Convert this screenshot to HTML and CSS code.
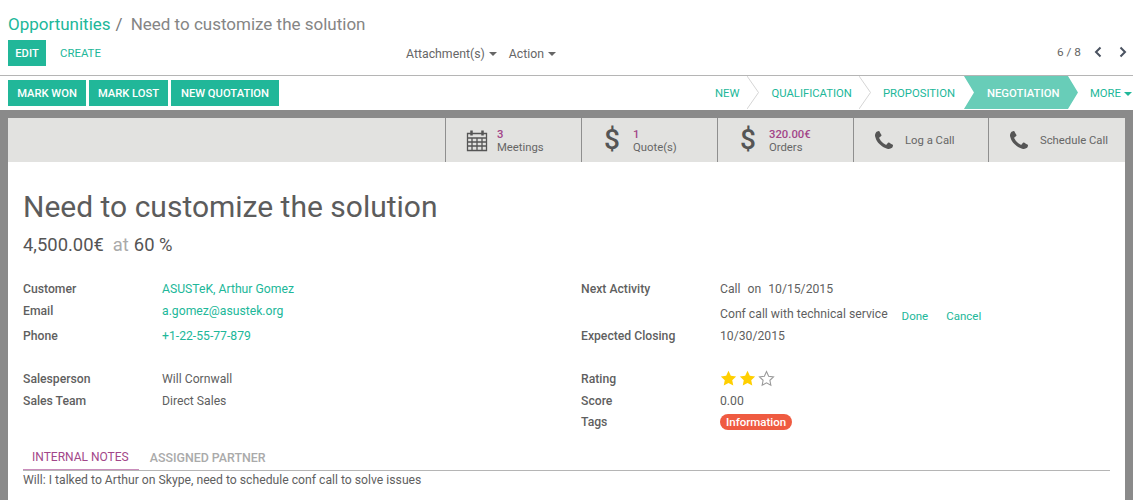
FILE: index.html
```html
<!DOCTYPE html>
<html lang="en">
<head>
<meta charset="utf-8">
<title>Need to customize the solution</title>
<link rel="stylesheet" href="styles.css">
</head>
<body>
<header class="control">
  <div class="crumbs"><a class="crumb-link">Opportunities</a><span class="crumb-sep">/</span><span class="crumb-cur">Need to customize the solution</span></div>
  <div class="actions">
    <div class="actions-left"><button class="btn">EDIT</button><a class="link-btn">CREATE</a></div>
    <div class="actions-mid"><span class="drop">Attachment(s)<i class="caret"></i></span><span class="drop">Action<i class="caret"></i></span></div>
    <div class="pager"><span>6 / 8</span>
      <svg class="chev" viewBox="0 0 10 12"><path d="M7.500 1.500 3 6l4.500 4.500" /></svg>
      <svg class="chev chev-next" viewBox="0 0 10 12"><path d="M2.500 1.500 7 6l-4.500 4.500" /></svg>
    </div>
  </div>
</header>
<div class="statusbar">
  <div class="status-btns"><button class="btn">MARK WON</button><button class="btn">MARK LOST</button><button class="btn">NEW QUOTATION</button></div>
  <div class="stages">
    <span class="stage s-new">NEW<svg class="sep" viewBox="0 0 12 33" preserveAspectRatio="none"><path d="M0 0 11.500 16.500 0 33"/></svg></span>
    <span class="stage s-qual">QUALIFICATION<svg class="sep" viewBox="0 0 12 33" preserveAspectRatio="none"><path d="M0 0 11.500 16.500 0 33"/></svg></span>
    <span class="stage s-prop">PROPOSITION</span>
    <span class="stage s-active">NEGOTIATION</span>
    <span class="stage s-more">MORE<i class="caret caret-teal"></i></span>
  </div>
</div>
<main class="backdrop">
  <div class="sheet">
    <div class="buttonbox">
      <div class="stat"><svg class="ico-cal" viewBox="0 0 22 23"><path class="cal" d="M1.500 4.500h19v17h-19zM1.500 9h19M1.500 13h19M1.500 17h19M6 9v12.500M11 9v12.500M16 9v12.500"/><path class="cal cal-ring" d="M5.500 1.500v5M16.500 1.500v5"/></svg><div class="stat-txt"><b>3</b><span>Meetings</span></div></div>
      <div class="stat"><span class="dollar">$</span><div class="stat-txt"><b>1</b><span>Quote(s)</span></div></div>
      <div class="stat"><span class="dollar">$</span><div class="stat-txt"><b>320.00€</b><span>Orders</span></div></div>
      <div class="stat"><svg class="ico-phone" viewBox="0 0 1408 1408"><path d="M1408 1112q0 27-10 70.500t-21 68.500q-21 50-122 106-94 51-186 51-27 0-53-3.500t-57.500-12.500-47-14.500-55.500-20.500-49-18q-98-35-175-83-127-79-264-216t-216-264q-48-77-83-175-3-9-18-49t-20.500-55.500-14.500-47-12.500-57.500-3.500-53q0-92 51-186 56-101 106-122 25-11 68.500-21t70.500-10q14 0 21 3 18 6 53 76 11 19 30 54t35 63.500 31 53.500q3 4 17.500 25t21.500 35.500 7 28.500q0 20-28.500 50t-62 55-62 53-28.500 46q0 9 5 22.500t8.500 20.500 14 24 11.500 19q76 137 174 235t235 174q2 1 19 11.500t24 14 20.500 8.500 22.500 5q18 0 46-28.500t53-62 55-62 50-28.500q14 0 28.500 7t35.500 21.500 25 17.500q25 15 53.500 31t63.500 35 54 30q70 35 76 53 3 7 3 21z"/></svg><span class="stat-one">Log a Call</span></div>
      <div class="stat"><svg class="ico-phone" viewBox="0 0 1408 1408"><path d="M1408 1112q0 27-10 70.500t-21 68.500q-21 50-122 106-94 51-186 51-27 0-53-3.500t-57.500-12.500-47-14.500-55.500-20.500-49-18q-98-35-175-83-127-79-264-216t-216-264q-48-77-83-175-3-9-18-49t-20.500-55.500-14.500-47-12.500-57.500-3.500-53q0-92 51-186 56-101 106-122 25-11 68.500-21t70.500-10q14 0 21 3 18 6 53 76 11 19 30 54t35 63.500 31 53.500q3 4 17.500 25t21.500 35.500 7 28.500q0 20-28.500 50t-62 55-62 53-28.500 46q0 9 5 22.500t8.500 20.500 14 24 11.500 19q76 137 174 235t235 174q2 1 19 11.500t24 14 20.500 8.500 22.500 5q18 0 46-28.500t53-62 55-62 50-28.500q14 0 28.500 7t35.500 21.500 25 17.500q25 15 53.500 31t63.500 35 54 30q70 35 76 53 3 7 3 21z"/></svg><span class="stat-one">Schedule Call</span></div>
    </div>
    <div class="body">
      <h1 class="title">Need to customize the solution</h1>
      <div class="amount">4,500.00€<span class="at">at</span>60 %</div>
      <div class="cols">
        <div class="col">
          <div class="row r-customer"><label>Customer</label><a>ASUSTeK, Arthur Gomez</a></div>
          <div class="row r-email"><label>Email</label><a>a.gomez@asustek.org</a></div>
          <div class="row r-phone"><label>Phone</label><a>+1-22-55-77-879</a></div>
          <div class="row r-sales"><label>Salesperson</label><span>Will Cornwall</span></div>
          <div class="row r-team"><label>Sales Team</label><span>Direct Sales</span></div>
        </div>
        <div class="col">
          <div class="row r-customer"><label>Next Activity</label><span class="activity"><span>Call</span><span>on</span><span>10/15/2015</span></span></div>
          <div class="row r-conf"><label></label><span>Conf call with technical service</span><a class="act act-done">Done</a><a class="act">Cancel</a></div>
          <div class="row r-close"><label>Expected Closing</label><span>10/30/2015</span></div>
          <div class="row r-rating"><label>Rating</label><span class="stars">
            <svg viewBox="0 0 16 16"><path class="on" d="m8 .8 2.200 4.700 5 .6-3.700 3.500 1 5.100L8 12.200l-4.500 2.500 1-5.100L.8 6.100l5-.6z"/></svg>
            <svg viewBox="0 0 16 16"><path class="on" d="m8 .8 2.200 4.700 5 .6-3.700 3.500 1 5.100L8 12.200l-4.500 2.500 1-5.100L.8 6.100l5-.6z"/></svg>
            <svg viewBox="0 0 16 16"><path class="off" d="m8 1.500 2 4.400 4.600.6-3.400 3.200.9 4.700L8 12.100l-4.100 2.300.9-4.700L1.400 6.500 6 5.900z"/></svg>
          </span></div>
          <div class="row r-score"><label>Score</label><span>0.00</span></div>
          <div class="row r-tags"><label>Tags</label><span class="tag">Information</span></div>
        </div>
      </div>
      <div class="tabs"><span class="tab tab-on">INTERNAL NOTES</span><span class="tab">ASSIGNED PARTNER</span></div>
      <p class="note">Will: I talked to Arthur on Skype, need to schedule conf call to solve issues</p>
    </div>
  </div>
</main>
</body>
</html>
```
FILE: styles.css
```css
html, body { margin: 0; padding: 0; height: 500px; overflow: hidden; }
body { font-family: Roboto, sans-serif; font-size: 12.200px; line-height: 18px; color: #5f5f5f; background: #fff; }
a { color: #21b799; }
button { font-family: inherit; }

.control { box-sizing: border-box; padding: 14px 8px 0; border-bottom: 1px solid #b5b5b5; height: 76px; }
.crumbs { font-size: 17px; line-height: 20px; height: 26px; display: flex; }
.crumb-link { color: #21b799; }
.crumb-sep { color: #777; margin: 0 8px 0 5px; }
.crumb-cur { color: #858585; }
.actions { display: flex; align-items: center; height: 26px; }
.actions-left { display: flex; align-items: center; width: 398px; }
.btn { border: 0; background: #21b799; color: #fff; font-size: 11.200px; font-weight: 500; height: 26px; padding: 0; }
.actions .btn { width: 38px; }
.link-btn { margin-left: 14px; font-size: 11.400px; }
.actions-mid { display: flex; gap: 12px; flex: 1; padding-top: 1px; }
.drop { color: #666; display: inline-flex; align-items: center; font-size: 12.300px; }
.caret { display: inline-block; width: 0; height: 0; border: 4px solid transparent; border-top-color: #666; border-bottom: 0; margin-left: 4px; }
.pager { display: flex; align-items: center; color: #666; margin-right: -3px; font-size: 11.800px; padding-bottom: 3px; }
.chev { width: 10px; height: 12px; margin-left: 12px; }
.chev-next { margin-left: 15px; }
.chev path { fill: none; stroke: #4a5260; stroke-width: 2; }

.statusbar { display: flex; justify-content: space-between; height: 34px; padding-left: 8px; }
.status-btns { display: flex; gap: 3px; padding-top: 4px; }
.status-btns .btn:nth-child(1) { width: 78px; }
.status-btns .btn:nth-child(2) { width: 79px; }
.status-btns .btn:nth-child(3) { width: 108px; }
.stages { display: flex; align-items: center; font-size: 11.300px; color: #21b799; height: 33px; margin-right: 1px; }
.stage { display: flex; align-items: center; height: 33px; position: relative; box-sizing: border-box; padding-top: 3px; }
.sep { position: absolute; top: 0; width: 12px; height: 33px; }
.sep path { fill: none; stroke: #d5d5d5; stroke-width: 1; }
.s-new { padding-right: 32px; }
.s-new .sep { right: 12px; }
.s-qual { padding-right: 31px; }
.s-qual .sep { right: 12px; }
.s-prop { padding-right: 9px; }
.s-active { background: #68cdb8; color: #fff; font-weight: 500; width: 114px; padding-left: 23px; clip-path: polygon(0 0, 104px 0, 114px 50%, 104px 100%, 0 100%, 10px 50%); }
.s-more { padding-left: 12px; }
.caret-teal { border-top-color: #21b799; margin-left: 3px; }

.backdrop { background: #8a8a8a; padding: 8px 8px 0; height: 390px; box-sizing: border-box; }
.sheet { background: #fff; height: 382px; }
.buttonbox { display: flex; justify-content: flex-end; height: 44px; background: #e2e2e0; padding-right: 1px; }
.stat { width: 135px; border-left: 1px solid #8f8f8f; display: flex; align-items: center; }
.stat:nth-child(4) { width: 134px; }
.stat-txt { display: flex; flex-direction: column; font-size: 11.300px; line-height: 13px; color: #666; margin-top: 2px; }
.stat-txt b { color: #a24689; font-weight: 500; }
.stat-one { font-size: 11.300px; color: #666; margin: 2px 0 0 11px; }
.ico-cal { width: 22px; height: 23px; margin-left: 20px; margin-right: 9px; }
.cal { fill: none; stroke: #555; stroke-width: 1.300; }
.cal-ring { stroke-width: 2.500; }
.dollar { font-size: 28px; font-weight: 500; color: #555; width: 16px; margin-left: 22px; margin-right: 13px; text-align: center; line-height: 30px; }
.ico-phone { width: 18px; height: 18px; margin: -1px 1px 0 21px; }
.ico-phone path { fill: #555; }

.body { padding: 0 15px; }
.title { font-size: 30px; font-weight: 400; line-height: 40px; margin: 25px 0 0; color: #5c5c5c; }
.amount { font-size: 18.400px; line-height: 22px; margin-top: 7px; color: #555; }
.at { color: #aaa; margin: 0 5px 0 9px; }
.cols { display: grid; grid-template-columns: 558px 1fr; margin-top: 22px; }
.row { display: flex; align-items: center; height: 22px; }
.row label { width: 139px; flex: none; font-weight: 500; color: #5f5f5f; }
.r-email { margin-top: 0; }
.r-phone { margin-top: 3px; }
.r-sales { margin-top: 21px; }
.r-team { margin-top: 0; }
.r-conf { margin-top: 2px; height: 24px; }
.r-close { margin-top: -1px; }
.r-rating { margin-top: 21px; }
.r-score { margin-top: 0; }
.r-tags { margin-top: -1px; }
.act { margin-left: 14px; font-size: 11.500px; position: relative; top: 2px; }
.act-done { margin-right: 4px; }
.activity { display: flex; gap: 7px; }
.stars { display: flex; gap: 2px; margin-top: -2px; }
.stars svg { width: 17px; height: 17px; }
.on { fill: #ffcf00; }
.off { fill: none; stroke: #999; stroke-width: 1; }
.tag { background: #ef5b41; color: #fff; border-radius: 9px; font-size: 11.500px; font-weight: 500; line-height: 16px; padding: 0 6px; }
.tabs { display: flex; margin-top: 13px; border-bottom: 1px solid #b5b5b5; height: 24px; }
.tab { font-size: 12px; color: #aaa; padding: 0 10px 1px 9px; font-weight: 500; height: 24px; box-sizing: border-box; display: flex; align-items: center; margin-bottom: -1px; }
.tab:nth-child(2) { padding-left: 11px; font-size: 12.400px; }
.tab-on { color: #a24689; font-weight: 400; border-bottom: 1px solid #c98dbb; }
.note { margin: 1px 0 0; line-height: 16px; font-size: 12.200px; }
```
